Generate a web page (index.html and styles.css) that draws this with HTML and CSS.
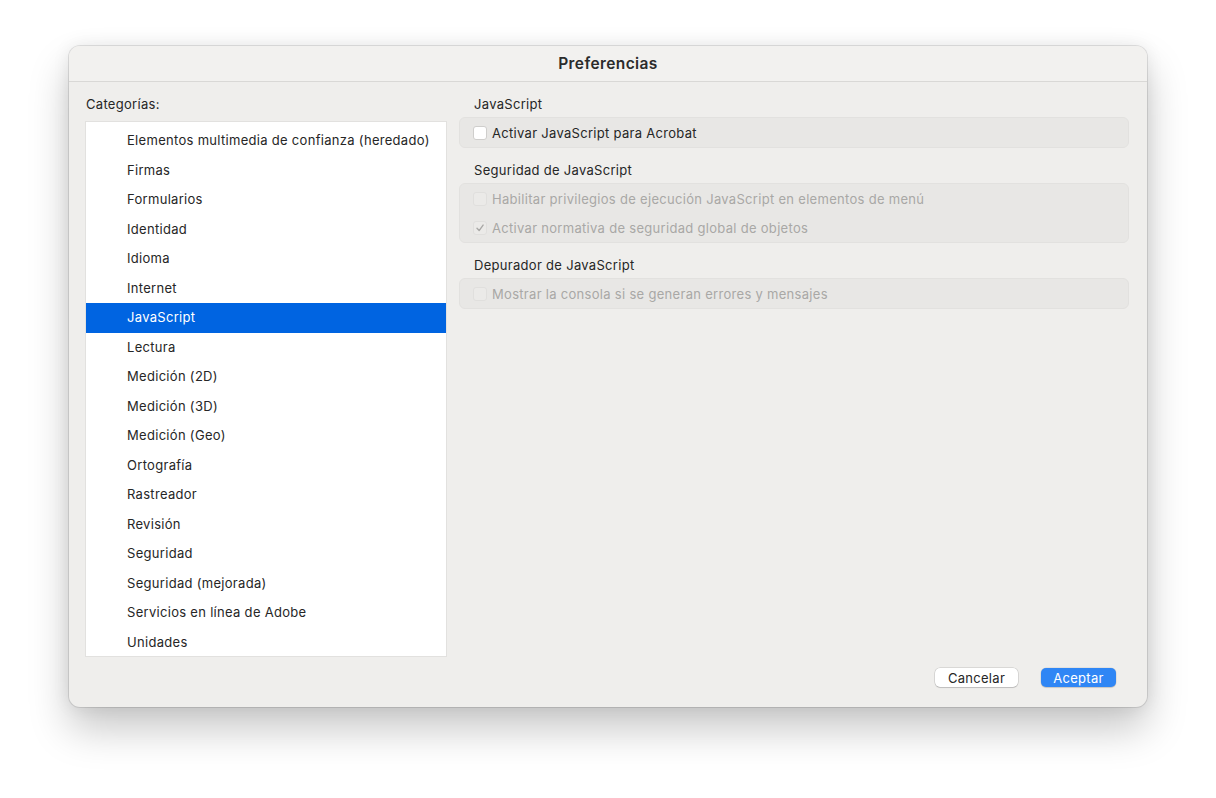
FILE: index.html
```html
<!DOCTYPE html>
<html lang="es">
<head>
<meta charset="utf-8">
<title>Preferencias</title>
<link rel="stylesheet" href="styles.css">
</head>
<body>
<div class="window">
  <div class="titlebar">Preferencias</div>
  <div class="content">
    <div class="left">
      <div class="cat-label">Categorías:</div>
      <ul class="list">
        <li>Elementos multimedia de confianza (heredado)</li>
        <li>Firmas</li>
        <li>Formularios</li>
        <li>Identidad</li>
        <li>Idioma</li>
        <li>Internet</li>
        <li class="selected">JavaScript</li>
        <li>Lectura</li>
        <li>Medición (2D)</li>
        <li>Medición (3D)</li>
        <li>Medición (Geo)</li>
        <li>Ortografía</li>
        <li>Rastreador</li>
        <li>Revisión</li>
        <li>Seguridad</li>
        <li>Seguridad (mejorada)</li>
        <li>Servicios en línea de Adobe</li>
        <li>Unidades</li>
      </ul>
    </div>
    <div class="right">
      <div class="section-title">JavaScript</div>
      <div class="group">
        <div class="row"><span class="cb"></span><span>Activar JavaScript para Acrobat</span></div>
      </div>
      <div class="section-title">Seguridad de JavaScript</div>
      <div class="group">
        <div class="row disabled"><span class="cb"></span><span>Habilitar privilegios de ejecución JavaScript en elementos de menú</span></div>
        <div class="row disabled"><span class="cb checked"><svg viewBox="0 0 14 14" width="14" height="14"><path d="M3.5 7.4 L6 10 L10.6 3.6" fill="none" stroke="#a9a8a6" stroke-width="1.6" stroke-linecap="round" stroke-linejoin="round"/></svg></span><span>Activar normativa de seguridad global de objetos</span></div>
      </div>
      <div class="section-title">Depurador de JavaScript</div>
      <div class="group">
        <div class="row disabled"><span class="cb"></span><span>Mostrar la consola si se generan errores y mensajes</span></div>
      </div>
    </div>
  </div>
  <div class="footer">
    <button class="btn">Cancelar</button>
    <button class="btn primary">Aceptar</button>
  </div>
</div>
</body>
</html>
```

FILE: styles.css
```css
html, body {
  margin: 0;
  padding: 0;
  background: #ffffff;
}
body {
  font-family: "Inter", "Liberation Sans", sans-serif;
  font-size: 13px;
  letter-spacing: 0.3px;
  color: #262626;
  padding: 46px 0 0 69px;
  height: 798px;
  box-sizing: border-box;
}
.window {
  width: 1078px;
  height: 661px;
  background: #efeeec;
  border-radius: 11px;
  box-shadow: 0 0 0 1px rgba(0,0,0,0.10), 0 22px 40px rgba(0,0,0,0.22), 0 0 18px rgba(0,0,0,0.08);
  display: flex;
  flex-direction: column;
  box-sizing: border-box;
  overflow: hidden;
}
.titlebar {
  height: 36px;
  line-height: 35px;
  text-align: center;
  font-weight: 600;
  font-size: 15.5px;
  letter-spacing: 0.4px;
  color: #2b2b2b;
  border-bottom: 1px solid #d9d8d6;
  box-sizing: border-box;
  background: #f2f1ef;
}
.content {
  display: flex;
  padding: 13px 18px 0 16px;
  gap: 12px;
  flex: 1;
}
.left {
  width: 362px;
  display: flex;
  flex-direction: column;
}
.cat-label {
  height: 19px;
  line-height: 19px;
  padding-left: 1px;
  margin-top: 0;
  margin-bottom: 7px;
}
.list {
  list-style: none;
  margin: 0;
  padding: 4px 0 0 0;
  background: #ffffff;
  border: 1px solid #e2e1df;
  height: 536px;
  box-sizing: border-box;
}
.list li {
  height: 29.53px;
  line-height: 29.53px;
  padding-left: 41px;
  white-space: nowrap;
  color: #262626;
}
.list li.selected {
  background: #0064e1;
  color: #ffffff;
}
.right {
  flex: 1;
  display: flex;
  flex-direction: column;
}
.section-title {
  height: 19px;
  line-height: 19px;
  padding-left: 15px;
}
.group {
  background: #e8e7e5;
  border: 1px solid #e2e1df;
  border-radius: 6px;
  padding: 0 14px 0 13px;
  margin-top: 3px;
  margin-bottom: 13px;
}
.group .row {
  height: 29px;
  display: flex;
  align-items: center;
  gap: 5px;
}
.row.disabled {
  color: #a9a8a6;
}
.cb {
  width: 14px;
  height: 14px;
  border-radius: 3px;
  background: #ffffff;
  border: 1px solid #cfcecc;
  box-sizing: border-box;
  display: inline-flex;
  align-items: center;
  justify-content: center;
  flex: none;
}
.row.disabled .cb {
  background: #ebeae8;
  border-color: #e0dfdd;
}
.footer {
  height: 50px;
  display: flex;
  justify-content: flex-end;
  align-items: flex-start;
  padding: 11px 31px 0 0;
  gap: 23px;
  box-sizing: border-box;
}
.btn {
  font-family: "Inter", "Liberation Sans", sans-serif;
  font-size: 13px;
  letter-spacing: 0.3px;
  height: 19px;
  padding: 0;
  border: none;
  border-radius: 5px;
  background: #ffffff;
  color: #262626;
  box-shadow: 0 0 0 0.5px rgba(0,0,0,0.18), 0 1px 1px rgba(0,0,0,0.12);
  width: 83px;
}
.btn.primary {
  background: #2f86f5;
  color: #ffffff;
  width: 75px;
  box-shadow: 0 0 0 0.5px rgba(0,0,0,0.1), 0 1px 1px rgba(0,0,0,0.12);
}
```
